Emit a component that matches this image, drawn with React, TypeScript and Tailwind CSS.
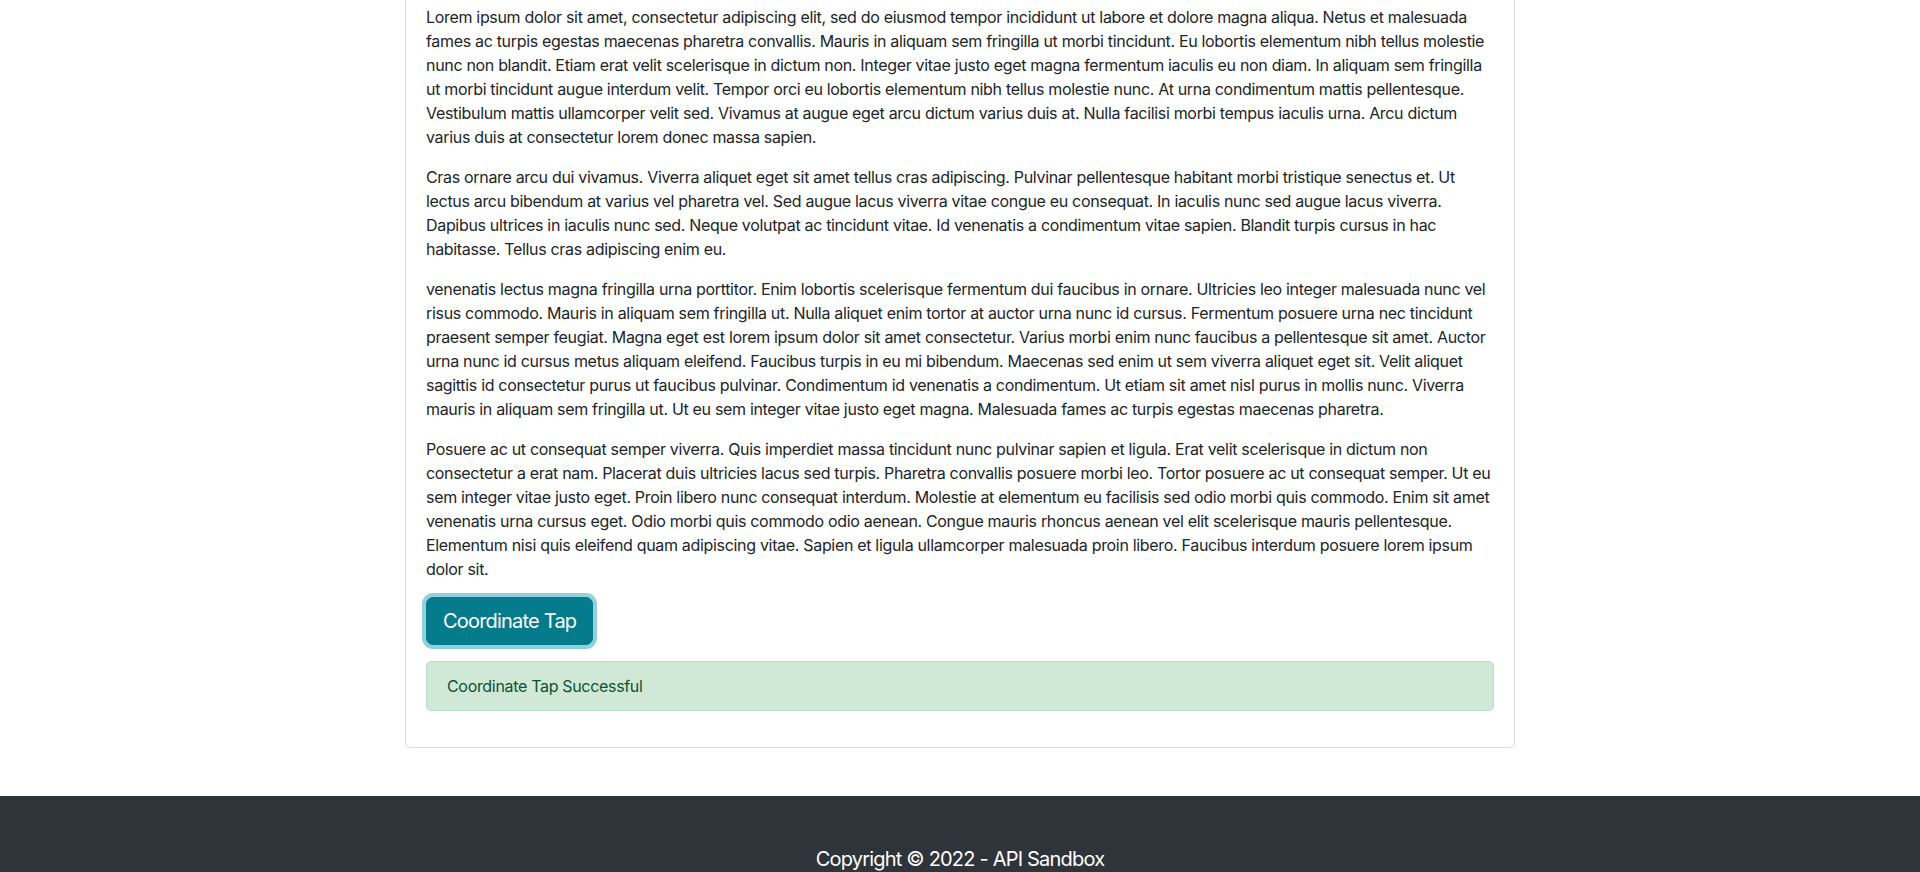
import { useState } from 'react'

const paragraphs = [
  'Lorem ipsum dolor sit amet, consectetur adipiscing elit, sed do eiusmod tempor incididunt ut labore et dolore magna aliqua. Netus et malesuada fames ac turpis egestas maecenas pharetra convallis. Mauris in aliquam sem fringilla ut morbi tincidunt. Eu lobortis elementum nibh tellus molestie nunc non blandit. Etiam erat velit scelerisque in dictum non. Integer vitae justo eget magna fermentum iaculis eu non diam. In aliquam sem fringilla ut morbi tincidunt augue interdum velit. Tempor orci eu lobortis elementum nibh tellus molestie nunc. At urna condimentum mattis pellentesque. Vestibulum mattis ullamcorper velit sed. Vivamus at augue eget arcu dictum varius duis at. Nulla facilisi morbi tempus iaculis urna. Arcu dictum varius duis at consectetur lorem donec massa sapien.',
  'Cras ornare arcu dui vivamus. Viverra aliquet eget sit amet tellus cras adipiscing. Pulvinar pellentesque habitant morbi tristique senectus et. Ut lectus arcu bibendum at varius vel pharetra vel. Sed augue lacus viverra vitae congue eu consequat. In iaculis nunc sed augue lacus viverra. Dapibus ultrices in iaculis nunc sed. Neque volutpat ac tincidunt vitae. Id venenatis a condimentum vitae sapien. Blandit turpis cursus in hac habitasse. Tellus cras adipiscing enim eu.',
  'venenatis lectus magna fringilla urna porttitor. Enim lobortis scelerisque fermentum dui faucibus in ornare. Ultricies leo integer malesuada nunc vel risus commodo. Mauris in aliquam sem fringilla ut. Nulla aliquet enim tortor at auctor urna nunc id cursus. Fermentum posuere urna nec tincidunt praesent semper feugiat. Magna eget est lorem ipsum dolor sit amet consectetur. Varius morbi enim nunc faucibus a pellentesque sit amet. Auctor urna nunc id cursus metus aliquam eleifend. Faucibus turpis in eu mi bibendum. Maecenas sed enim ut sem viverra aliquet eget sit. Velit aliquet sagittis id consectetur purus ut faucibus pulvinar. Condimentum id venenatis a condimentum. Ut etiam sit amet nisl purus in mollis nunc. Viverra mauris in aliquam sem fringilla ut. Ut eu sem integer vitae justo eget magna. Malesuada fames ac turpis egestas maecenas pharetra.',
  'Posuere ac ut consequat semper viverra. Quis imperdiet massa tincidunt nunc pulvinar sapien et ligula. Erat velit scelerisque in dictum non consectetur a erat nam. Placerat duis ultricies lacus sed turpis. Pharetra convallis posuere morbi leo. Tortor posuere ac ut consequat semper. Ut eu sem integer vitae justo eget. Proin libero nunc consequat interdum. Molestie at elementum eu facilisis sed odio morbi quis commodo. Enim sit amet venenatis urna cursus eget. Odio morbi quis commodo odio aenean. Congue mauris rhoncus aenean vel elit scelerisque mauris pellentesque. Elementum nisi quis eleifend quam adipiscing vitae. Sapien et ligula ullamcorper malesuada proin libero. Faucibus interdum posuere lorem ipsum dolor sit.',
]

export default function App() {
  const [tapped, setTapped] = useState(true)

  return (
    <div className="min-h-screen bg-white text-[#212529] font-['Inter',sans-serif] text-base leading-6 tracking-[-0.02em]">
      <main className="w-[1110px] mx-auto mb-12">
        <div className="border border-t-0 border-[#dcdcdc] rounded-b-[5px] px-5 pt-[5px] pb-5">
          {paragraphs.map((p, i) => (
            <p key={i} className="mb-4">{p}</p>
          ))}

          <button
            onClick={() => setTapped(true)}
            className="h-12 px-4 text-xl leading-[30px] tracking-[-0.04em] text-white bg-[#037b8a] border border-[#037b8a] rounded-[7px] ring-4 ring-[#8fd2dc] mb-4"
          >
            Coordinate Tap
          </button>

          {tapped && (
            <div className="py-3 px-5 mb-4 bg-[#cfe9d6] border border-[#badbcc] text-[#0f5132] rounded-[5px]">
              Coordinate Tap Successful
            </div>
          )}
        </div>
      </main>

      <footer className="bg-[#2f333a] pt-12 pb-12 text-center text-white text-xl leading-[30px] tracking-[-0.04em]">
        Copyright © 2022 - API Sandbox
      </footer>
    </div>
  )
}
